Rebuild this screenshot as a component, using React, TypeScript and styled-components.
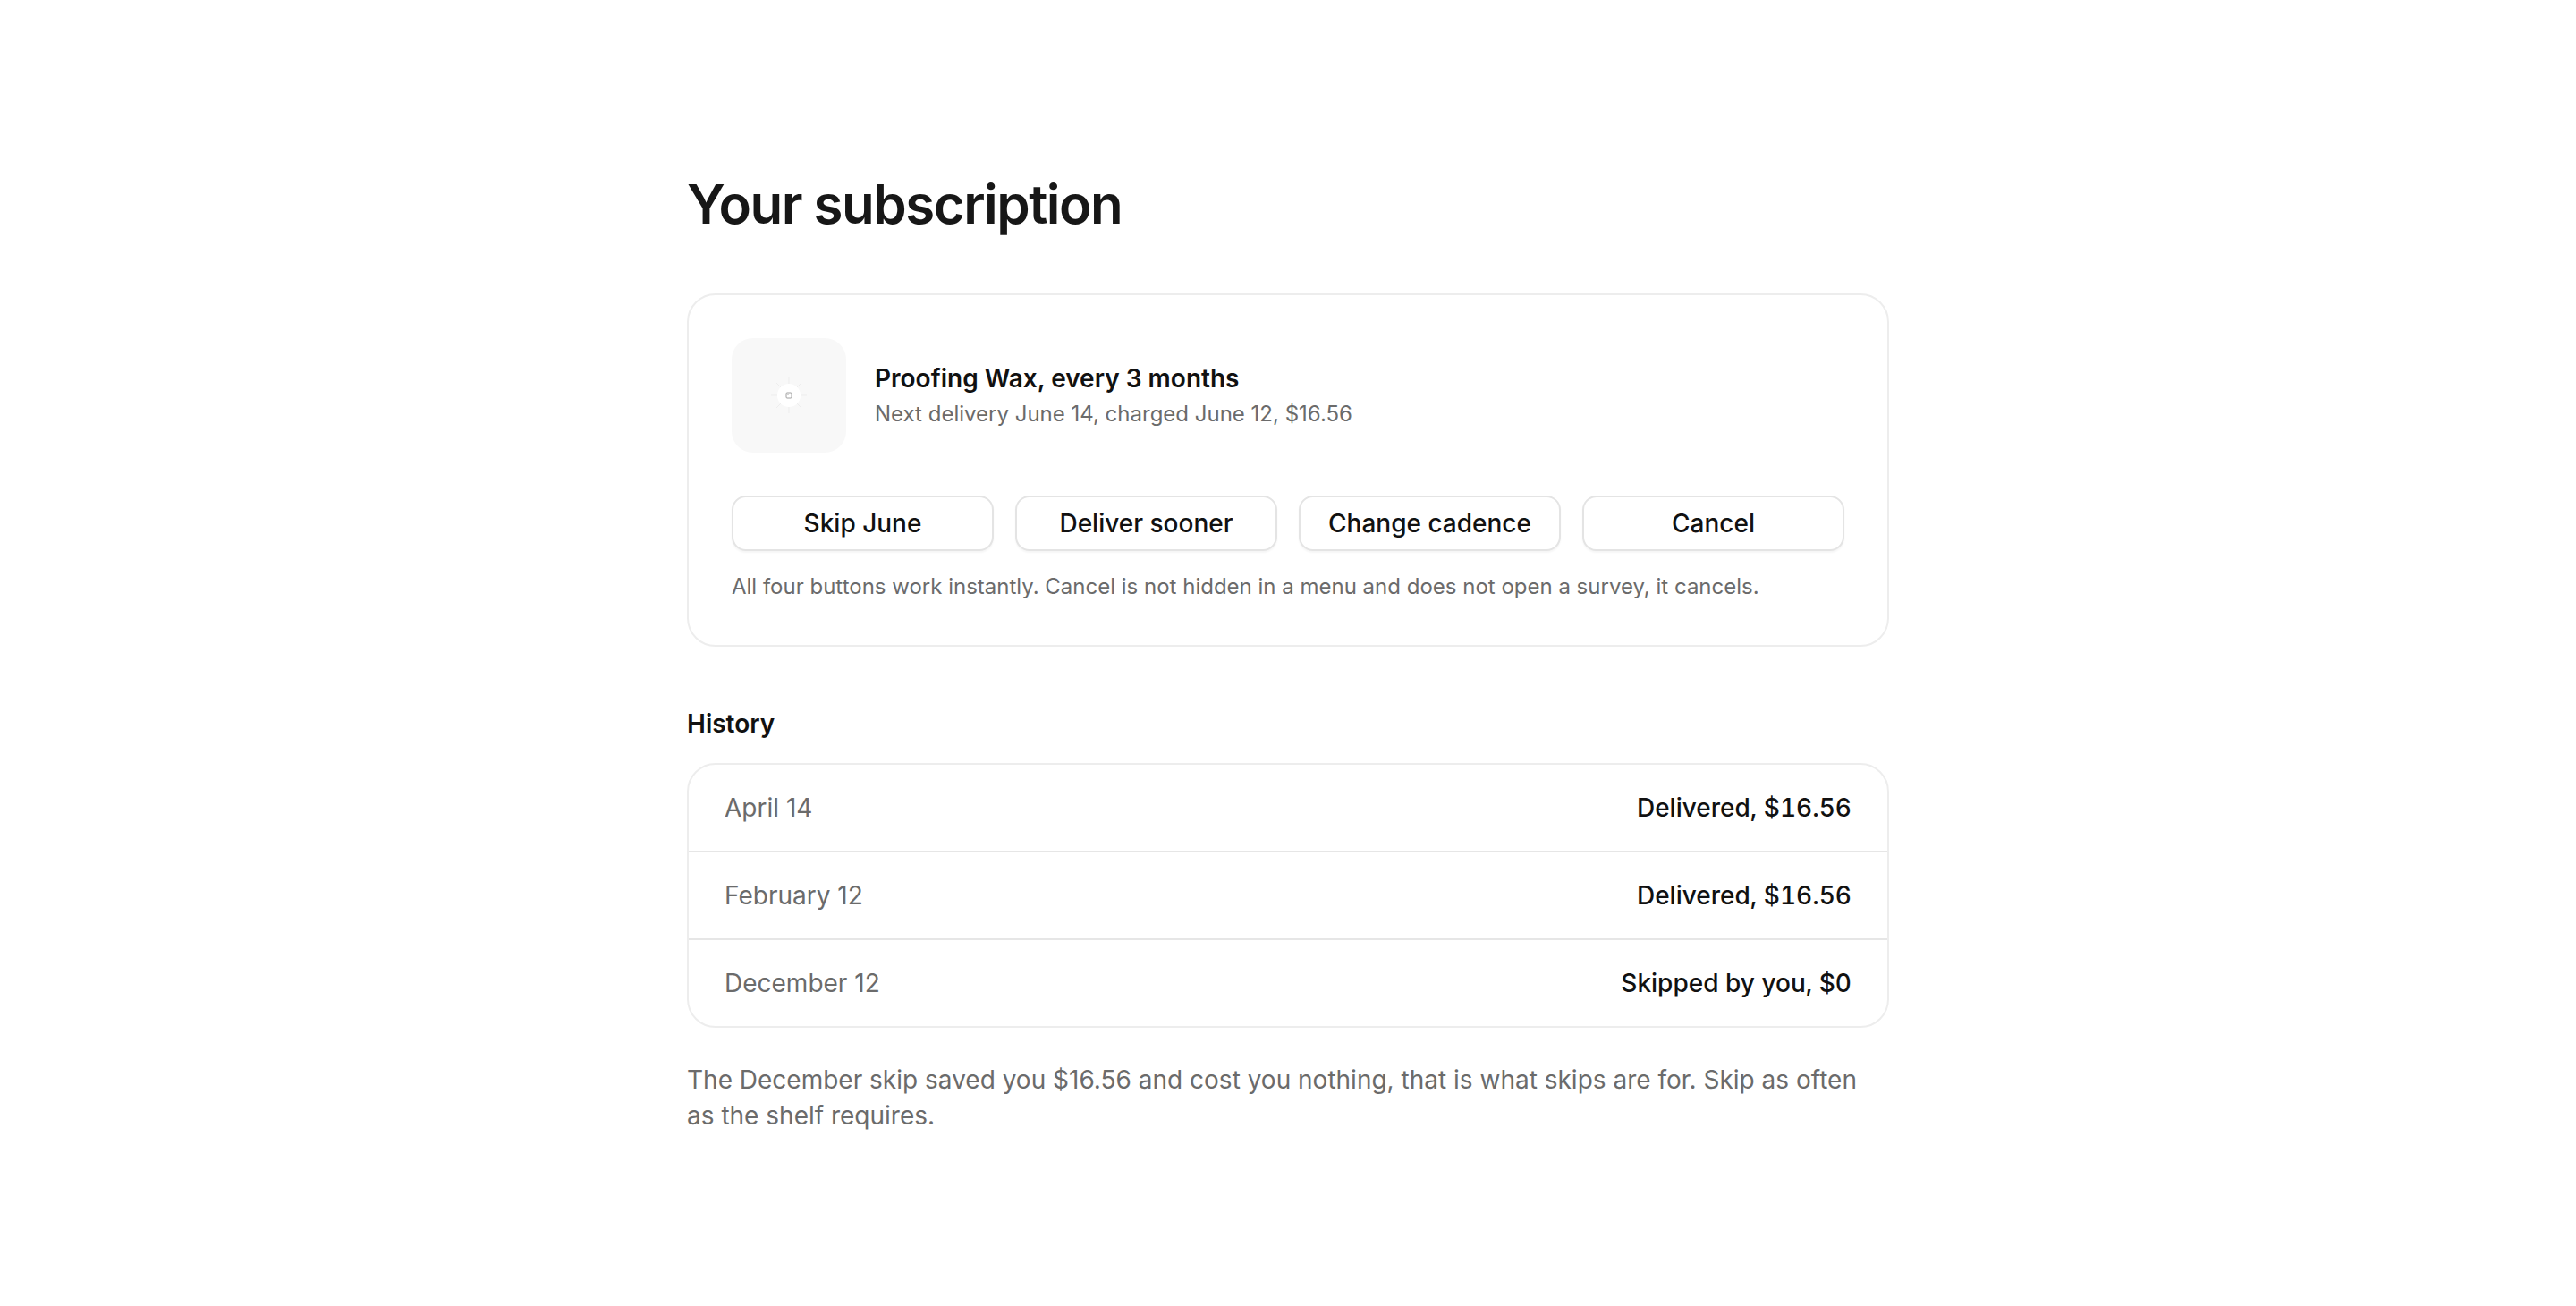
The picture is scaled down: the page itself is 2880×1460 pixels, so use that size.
import React from "react";
import styled, { createGlobalStyle } from "styled-components";

const GlobalStyle = createGlobalStyle`
  html, body { margin: 0; padding: 0; background: #ffffff; }
  body {
    font-family: Inter, "Noto Sans", "Liberation Sans", sans-serif;
    color: #171717;
    -webkit-font-smoothing: antialiased;
  }
  * { box-sizing: border-box; }
`;

const Page = styled.main`
  width: 1344px;
  margin: 0 auto;
  padding: 192px 0 120px;
`;

const Title = styled.h1`
  margin: 0 0 64px;
  font-size: 60px;
  line-height: 72px;
  font-weight: 600;
  letter-spacing: -0.025em;
  color: #171717;
`;

const Card = styled.section`
  border: 2px solid #ededed;
  border-radius: 32px;
  padding: 48px;
  background: #fff;
`;

const Product = styled.div`
  display: flex;
  align-items: center;
  gap: 32px;
`;

const Thumb = styled.div`
  width: 128px;
  height: 128px;
  border-radius: 24px;
  background: #f8f8f8;
  display: flex;
  align-items: center;
  justify-content: center;
  flex-shrink: 0;
`;

const ProductText = styled.div`
  display: flex;
  flex-direction: column;
  gap: 4px;
`;

const ProductName = styled.div`
  font-size: 28px;
  line-height: 38px;
  font-weight: 600;
  color: #111;
`;

const ProductMeta = styled.div`
  font-size: 24px;
  line-height: 34px;
  color: #6b6b6b;
`;

const Actions = styled.div`
  display: grid;
  grid-template-columns: repeat(4, 1fr);
  gap: 24px;
  margin-top: 48px;
`;

const ActionButton = styled.button`
  height: 62px;
  border: 2px solid #e4e4e4;
  border-radius: 16px;
  background: #fff;
  box-shadow: 0 2px 2px rgba(0, 0, 0, 0.04);
  font-family: inherit;
  font-size: 28px;
  font-weight: 500;
  color: #111;
  cursor: pointer;
`;

const Note = styled.p`
  margin: 23px 0 0;
  font-size: 24px;
  line-height: 34px;
  color: #6b6b6b;
`;

const SectionTitle = styled.h2`
  margin: 64px 0 22px;
  font-size: 28px;
  line-height: 44px;
  font-weight: 600;
  color: #111;
`;

const HistoryCard = styled.div`
  border: 2px solid #ededed;
  border-radius: 32px;
  overflow: hidden;
`;

const HistoryRow = styled.div`
  display: flex;
  justify-content: space-between;
  align-items: center;
  padding: 28px 40px;
  font-size: 28px;
  line-height: 40px;
  & + & { border-top: 2px solid #e6e6e6; }
`;

const RowDate = styled.span`
  color: #6b6b6b;
`;

const RowStatus = styled.span`
  color: #111;
  font-weight: 500;
  font-variant-numeric: tabular-nums;
`;

const Footer = styled.p`
  margin: 38px 0 0;
  font-size: 28px;
  line-height: 40px;
  color: #6b6b6b;
`;

const PlaceholderIcon = () => (
  <svg width="64" height="64" viewBox="0 0 64 64">
    <g stroke="#ededed" strokeWidth="1">
      <line x1="32" y1="12" x2="32" y2="52" />
      <line x1="12" y1="32" x2="52" y2="32" />
      <line x1="18" y1="18" x2="46" y2="46" />
      <line x1="46" y1="18" x2="18" y2="46" />
    </g>
    <circle cx="32" cy="32" r="13" fill="#ffffff" />
    <rect x="29" y="29" width="6" height="6" rx="1" fill="none" stroke="#a0a0a0" strokeWidth="1" />
    <circle cx="31" cy="31" r="0.8" fill="#a0a0a0" />
  </svg>
);

const history = [
  { date: "April 14", status: "Delivered, $16.56" },
  { date: "February 12", status: "Delivered, $16.56" },
  { date: "December 12", status: "Skipped by you, $0" },
];

export default function App() {
  return (
    <>
      <GlobalStyle />
      <Page>
        <Title>Your subscription</Title>
        <Card>
          <Product>
            <Thumb>
              <PlaceholderIcon />
            </Thumb>
            <ProductText>
              <ProductName>Proofing Wax, every 3 months</ProductName>
              <ProductMeta>Next delivery June 14, charged June 12, $16.56</ProductMeta>
            </ProductText>
          </Product>
          <Actions>
            <ActionButton>Skip June</ActionButton>
            <ActionButton>Deliver sooner</ActionButton>
            <ActionButton>Change cadence</ActionButton>
            <ActionButton>Cancel</ActionButton>
          </Actions>
          <Note>
            All four buttons work instantly. Cancel is not hidden in a menu and does not open a survey, it cancels.
          </Note>
        </Card>
        <SectionTitle>History</SectionTitle>
        <HistoryCard>
          {history.map((h) => (
            <HistoryRow key={h.date}>
              <RowDate>{h.date}</RowDate>
              <RowStatus>{h.status}</RowStatus>
            </HistoryRow>
          ))}
        </HistoryCard>
        <Footer>
          The December skip saved you $16.56 and cost you nothing, that is what skips are for. Skip as often as the shelf requires.
        </Footer>
      </Page>
    </>
  );
}
